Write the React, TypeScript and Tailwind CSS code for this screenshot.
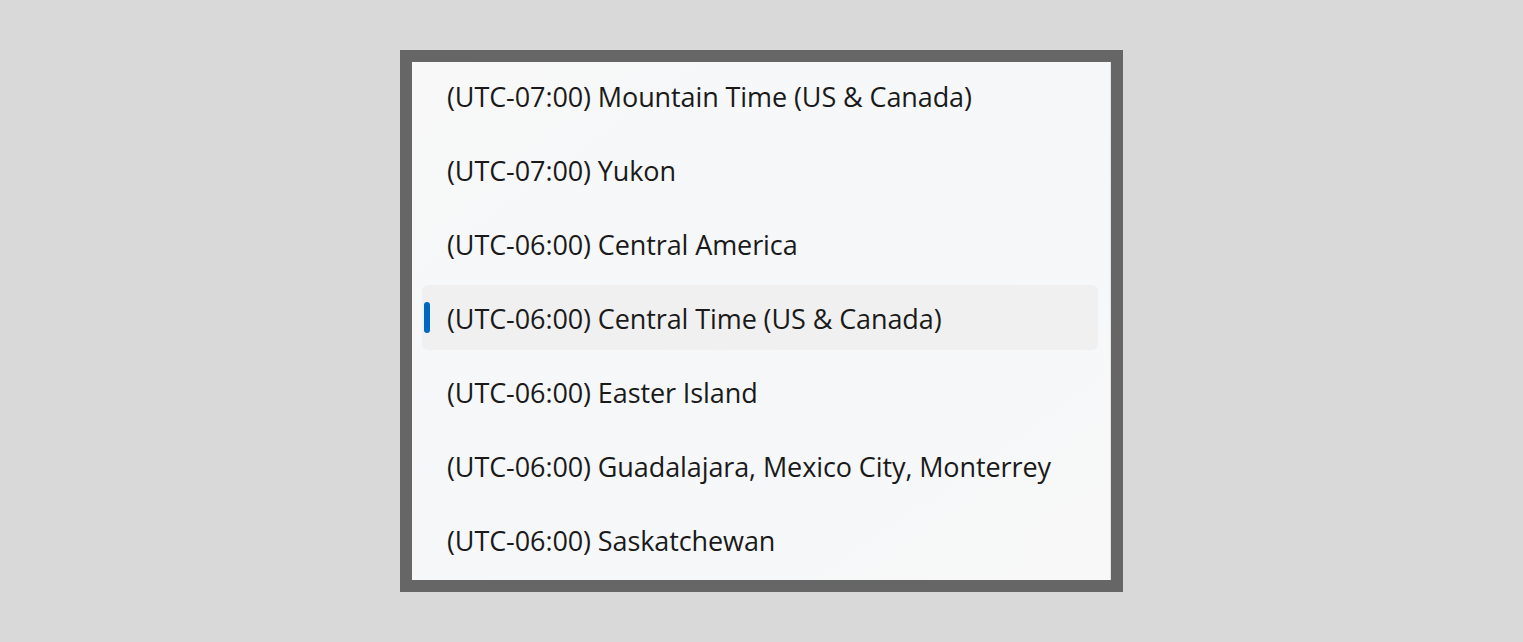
import React from "react";

const zones = [
  "(UTC-07:00) Mountain Time (US & Canada)",
  "(UTC-07:00) Yukon",
  "(UTC-06:00) Central America",
  "(UTC-06:00) Central Time (US & Canada)",
  "(UTC-06:00) Easter Island",
  "(UTC-06:00) Guadalajara, Mexico City, Monterrey",
  "(UTC-06:00) Saskatchewan",
];

const SELECTED = 3;

export default function App() {
  return (
    <div className="w-[1523px] h-[642px] bg-[#d9d9d9] flex items-center justify-center font-['Open_Sans',sans-serif]">
      <div className="w-[723px] h-[542px] bg-[#666666] p-[12px]">
        <div className="h-full bg-gradient-to-br from-[#f8f8f8] via-[#f5f7f9] to-[#f8f8f8] border-r border-[#e2e2e2] pt-[1px] pl-[10px] pr-[12px] flex flex-col gap-[9px]">
          {zones.map((z, i) => (
            <div
              key={z}
              className={
                "relative h-[65px] shrink-0 rounded-[6px] flex items-center pl-[25px] text-[27px] text-[#1a1a1a] tracking-[-0.1px] " +
                (i === SELECTED ? "bg-[#f0f0f0]" : "")
              }
            >
              {i === SELECTED && (
                <span className="absolute left-[2px] top-[17px] w-[6px] h-[31px] rounded-full bg-[#0067c0]" />
              )}
              <span className="mt-[4px]">{z}</span>
            </div>
          ))}
        </div>
      </div>
    </div>
  );
}
